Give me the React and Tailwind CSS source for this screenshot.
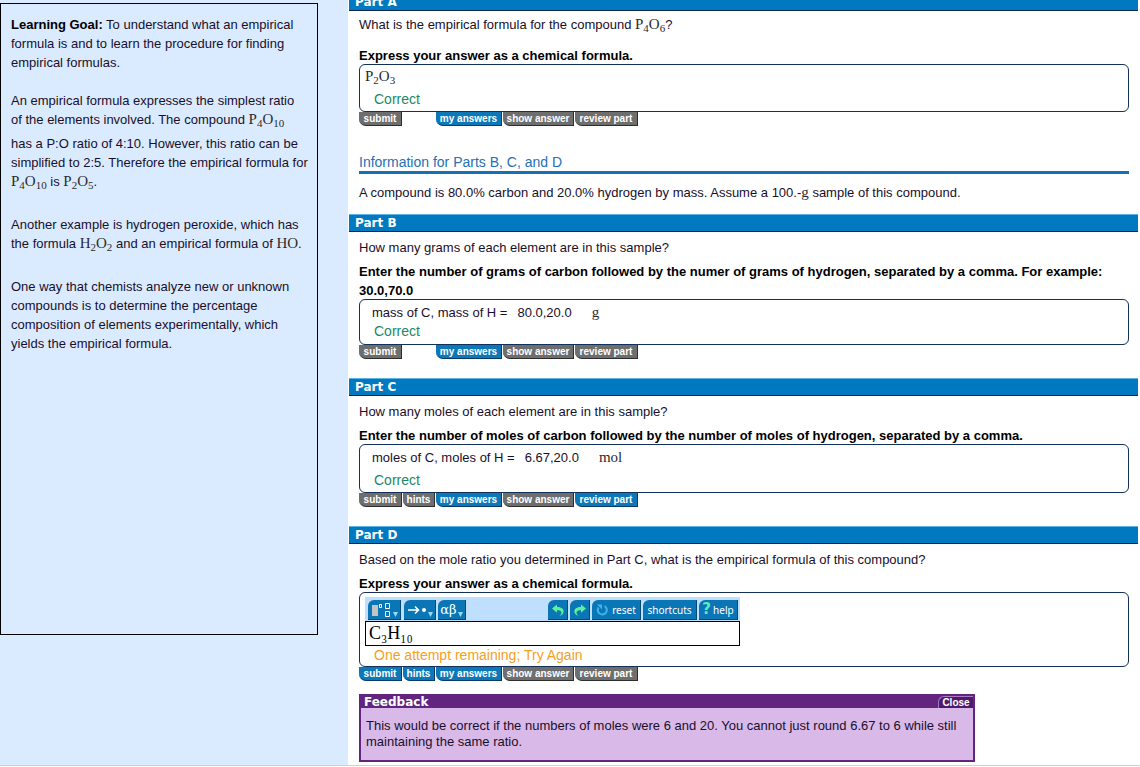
import clsx from "clsx";

const PartHeader = ({children, className}) => (
    <h2
        className={clsx(
            "h-[18px] border-t border-b border-t-[#5fb4e6] border-b-[#06264a] bg-[#0079c1] pl-1.5 font-['DejaVu_Sans',sans-serif] text-[12px] leading-[17px] font-bold text-white",
            className
        )}
    >
        {children}
    </h2>
);

// "P4O10" -> P<sub>4</sub>O<sub>10</sub>
const Formula = ({value}) => (
    <span className="font-['Liberation_Serif',serif] text-[15px] leading-none text-[#2b2b2b]">
        {value.split(/(\d+)/).map((part, i) =>
            /\d/.test(part) ? (
                <sub key={i} className="bottom-[-3px] text-[11px] leading-none">{part}</sub>
            ) : (
                part
            )
        )}
    </span>
);

const Instruction = ({children, className}) => (
    <p className={clsx("font-bold text-black", className)}>{children}</p>
);

const ACTIONS = [
    {id: "submit", label: "submit", width: "w-[43px]"},
    {id: "hints", label: "hints", width: "w-8"},
    {id: "my", label: "my answers", width: "w-[66px]"},
    {id: "show", label: "show answer", width: "w-[71px]"},
    {id: "review", label: "review part", width: "w-[63px]"},
];

function ActionBar({active, hidden = []}) {
    return (
        <div className="flex gap-px">
            {ACTIONS.map(({id, label, width}) => (
                <button
                    key={id}
                    type="button"
                    className={clsx(
                        "h-3.5 rounded-bl-[7px] border-r border-b text-center text-[10px] leading-3 font-bold whitespace-nowrap text-white",
                        width,
                        hidden.includes(id) && "invisible",
                        active.includes(id)
                            ? "border-[#033a66] bg-[#0c78b8]"
                            : "border-[#2d2d2d] bg-[#6e6e6e]"
                    )}
                >
                    {label}
                </button>
            ))}
        </div>
    );
}

const AnswerBox = ({children, className}) => (
    <div className={clsx("-mt-px rounded-[6px] border border-[#12305a] px-[5px]", className)}>{children}</div>
);

const Correct = ({className}) => (
    <p className={clsx("pl-[9px] text-[14px] text-[#1a8868]", className)}>Correct</p>
);

const ToolButton = ({children, className, ...rest}) => (
    <button
        type="button"
        className={clsx(
            "relative flex h-5 items-center justify-center rounded-tl-[6px] border-r border-b border-[#04487c] bg-[#0b76b6] font-['Noto_Sans',sans-serif] text-[10px] leading-none text-white",
            className
        )}
        {...rest}
    >
        {children}
    </button>
);

const Caret = () => (
    <svg viewBox="0 0 5 5" className="absolute right-0.5 bottom-0.5 h-[5px] w-[5px]" fill="#8fdcf5">
        <path d="M0 0h5L2.5 5z" />
    </svg>
);

const CurvedArrow = ({className}) => (
    <svg viewBox="0 0 14 14" className={clsx("h-3.5 w-3.5", className)} fill="#5ff09a">
        <path d="M1 5.500 6 1.500v2.400c4.200 0 6.600 1.600 6.600 4.600 0 2.200-1.600 3.800-4.200 4.300 1.500-1.200 2.200-2.200 2-3.500C10.200 7.800 8.700 7.200 6 7.200v2.500z" />
    </svg>
);

function FormulaEditor() {
    return (
        <div className="w-[375px]">
            <div className="flex h-6 items-end gap-0.5 bg-[#bfdfff] pr-0.5 pb-px pl-[3px]">
                <ToolButton className="w-[33px]" aria-label="templates">
                    <svg viewBox="0 0 20 14" className="mr-1 h-3.5 w-5 shrink-0" fill="none" stroke="#fff">
                        <path d="M0 2h6v11H0z" fill="#c4c4c4" stroke="none" />
                        <path d="M7.500 1.500h2v3h-2zM13.500 .500h4v5h-4zM13.500 8.500h4v5h-4z" />
                    </svg>
                    <Caret />
                </ToolButton>
                <ToolButton className="ml-px w-8" aria-label="arrows">
                    <svg viewBox="0 0 20 12" className="mr-1.5 h-3 w-5 shrink-0" fill="none" stroke="#fff" strokeWidth="1.500">
                        <path d="M1 6h10M8 2.500 11.500 6 8 9.500" />
                        <circle cx="17" cy="6" r="2" fill="#fff" stroke="none" />
                    </svg>
                    <Caret />
                </ToolButton>
                <ToolButton className="w-7" aria-label="greek letters">
                    <span className="mr-1.5 font-['DejaVu_Serif',serif] text-[13px] leading-none">αβ</span>
                    <Caret />
                </ToolButton>
                <ToolButton className="ml-auto w-5" aria-label="undo">
                    <CurvedArrow />
                </ToolButton>
                <ToolButton className="w-5" aria-label="redo">
                    <CurvedArrow className="-scale-x-100" />
                </ToolButton>
                <ToolButton className="w-[49px] gap-1">
                    <svg viewBox="0 0 12 12" className="h-3 w-3" fill="none" stroke="#3fb4ec" strokeWidth="2">
                        <path d="M2.500 3.500A4.500 4.500 0 1 0 8.500 2" />
                        <path d="M1 .500h5v5z" fill="#3fb4ec" stroke="none" />
                    </svg>
                    reset
                </ToolButton>
                <ToolButton className="w-[54px]">shortcuts</ToolButton>
                <ToolButton className="w-[39px] gap-0.5">
                    <span className="font-['DejaVu_Sans',sans-serif] text-[15px] leading-none font-bold text-[#5fe8c0]">?</span>
                    help
                </ToolButton>
            </div>
            <input
                type="text"
                aria-label="Chemical formula"
                defaultValue="C₃H₁₀"
                className="block h-[25px] w-full border border-black bg-white px-[3px] font-['Liberation_Serif',serif] text-[18px] leading-none text-black outline-none"
            />
        </div>
    );
}

export default function App() {
    return (
        <div className="min-h-screen overflow-hidden bg-white font-['Liberation_Sans',Arial,sans-serif] text-[13px] leading-[19px] text-[#180f2b]">
            <div className="flex border-b border-[#cfcfcf]">
                <aside className="w-[348px] shrink-0 bg-[#dbebff] pt-[3px]">
                    <div className="mr-[30px] h-[632px] border border-black py-[11px] pl-2.5 whitespace-nowrap">
                        <p>
                            <b className="text-black">Learning Goal:</b> To understand what an empirical<br />
                            formula is and to learn the procedure for finding<br />
                            empirical formulas.
                        </p>
                        <p className="mt-[19px]">
                            An empirical formula expresses the simplest ratio<br />
                            of the elements involved. The compound <Formula value="P4O10" />
                        </p>
                        <p className="mt-[5px]">
                            has a P:O ratio of 4:10. However, this ratio can be<br />
                            simplified to 2:5. Therefore the empirical formula for<br />
                            <Formula value="P4O10" /> is <Formula value="P2O5" />.
                        </p>
                        <p className="mt-6">
                            Another example is hydrogen peroxide, which has<br />
                            the formula <Formula value="H2O2" /> and an empirical formula of <Formula value="HO" />.
                        </p>
                        <p className="mt-6">
                            One way that chemists analyze new or unknown<br />
                            compounds is to determine the percentage<br />
                            composition of elements experimentally, which<br />
                            yields the empirical formula.
                        </p>
                    </div>
                </aside>

                <main className="mr-0.5 ml-px min-w-0 flex-1">
                    <PartHeader className="-mt-[7px]">Part A</PartHeader>
                    <section className="pt-1 pr-[9px] pl-2.5">
                        <p>What is the empirical formula for the compound <Formula value="P4O6" />?</p>
                        <Instruction className="mt-3">Express your answer as a chemical formula.</Instruction>
                        <AnswerBox className="py-0.5">
                            <p><Formula value="P2O3" /></p>
                            <Correct className="mt-1" />
                        </AnswerBox>
                        <ActionBar active={["my"]} hidden={["hints"]} />
                        <h3 className="mt-7 border-b-[3px] border-[#1670b5] text-[14px] leading-[17px] text-[#2471b5]">
                            Information for Parts B, C, and D
                        </h3>
                        <p className="mt-[9px] mb-3">
                            A compound is 80.0% carbon and 20.0% hydrogen by mass. Assume a 100.-
                            <Formula value="g" /> sample of this compound.
                        </p>
                    </section>

                    <PartHeader>Part B</PartHeader>
                    <section className="pt-1.5 pr-[9px] pb-[19px] pl-2.5">
                        <p>How many grams of each element are in this sample?</p>
                        <Instruction className="mt-[5px]">
                            Enter the number of grams of carbon followed by the numer of grams of hydrogen, separated by a comma. For example:
                            <br />
                            30.0,70.0
                        </Instruction>
                        <AnswerBox className="py-[3px]">
                            <p className="flex items-baseline pl-[7px]">
                                mass of C, mass of H =<span className="mr-5 ml-2.5">80.0,20.0</span>
                                <Formula value="g" />
                            </p>
                            <Correct />
                        </AnswerBox>
                        <ActionBar active={["my"]} hidden={["hints"]} />
                    </section>

                    <PartHeader>Part C</PartHeader>
                    <section className="pt-1.5 pr-[9px] pb-[19px] pl-2.5">
                        <p>How many moles of each element are in this sample?</p>
                        <Instruction className="mt-[5px]">
                            Enter the number of moles of carbon followed by the number of moles of hydrogen, separated by a comma.
                        </Instruction>
                        <AnswerBox className="pt-[3px] pb-0.5">
                            <p className="flex items-baseline pl-[7px]">
                                moles of C, moles of H =<span className="mr-5 ml-2.5">6.67,20.0</span>
                                <Formula value="mol" />
                            </p>
                            <Correct className="mt-1" />
                        </AnswerBox>
                        <ActionBar active={["my", "review"]} />
                    </section>

                    <PartHeader>Part D</PartHeader>
                    <section className="pt-1.5 pr-[9px] pb-[3px] pl-2.5">
                        <p>Based on the mole ratio you determined in Part C, what is the empirical formula of this compound?</p>
                        <Instruction className="mt-[5px]">Express your answer as a chemical formula.</Instruction>
                        <AnswerBox className="pt-1 pb-px">
                            <FormulaEditor />
                            <p className="pl-[9px] text-[14px] text-[#f5a01e]">One attempt remaining; Try Again</p>
                        </AnswerBox>
                        <ActionBar active={["submit", "hints", "my"]} />

                        <div className="mt-[13px] max-w-[616px] border-2 border-[#62257f] bg-[#d8b9e7]">
                            <div className="flex h-3 items-center justify-between bg-[#62257f] pl-[3px]">
                                <h3 className="font-['DejaVu_Sans',sans-serif] text-[12px] leading-3 font-bold text-white">Feedback</h3>
                                <button
                                    type="button"
                                    className="h-3 w-[35px] rounded-tl-[6px] border-t border-l border-[#a878c0] bg-[#4f1a6b] text-[10px] leading-[11px] font-bold text-white"
                                >
                                    Close
                                </button>
                            </div>
                            <p className="px-[5px] py-2.5 leading-4">
                                This would be correct if the numbers of moles were 6 and 20. You cannot just round 6.67 to 6 while still
                                maintaining the same ratio.
                            </p>
                        </div>
                    </section>
                </main>
            </div>
        </div>
    );
}
